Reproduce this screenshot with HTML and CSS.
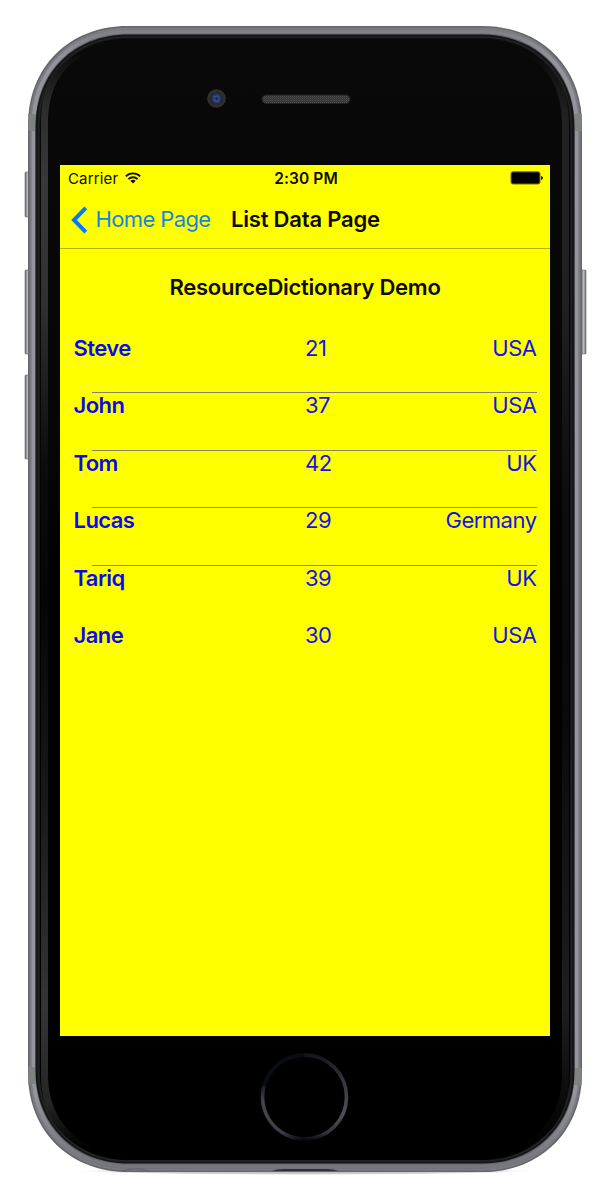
FILE: index.html
```html
<!DOCTYPE html>
<html lang="en">
<head>
<meta charset="utf-8">
<title>List Data Page</title>
<link rel="stylesheet" href="styles.css">
</head>
<body>
<main class="stage">
  <svg class="shell" viewBox="0 0 608 1200" aria-hidden="true">
    <defs>
      <linearGradient id="glareL" x1="0" y1="0" x2="0" y2="1">
        <stop offset="0" stop-color="#090909"/><stop offset=".05" stop-color="#2c2c2c"/>
        <stop offset=".12" stop-color="#383838"/><stop offset=".23" stop-color="#303030"/>
        <stop offset=".38" stop-color="#0c0c0c"/><stop offset=".5" stop-color="#050505"/>
        <stop offset=".7" stop-color="#1b1b1b"/><stop offset=".87" stop-color="#353535"/>
        <stop offset=".96" stop-color="#242424"/><stop offset="1" stop-color="#000"/>
      </linearGradient>
      <linearGradient id="glareR" x1="0" y1="0" x2="0" y2="1">
        <stop offset="0" stop-color="#090909"/><stop offset=".06" stop-color="#222"/>
        <stop offset=".23" stop-color="#202020"/><stop offset=".4" stop-color="#0d0d0d"/>
        <stop offset=".6" stop-color="#090909"/><stop offset=".87" stop-color="#1e1e1e"/>
        <stop offset="1" stop-color="#000"/>
      </linearGradient>
      <linearGradient id="face" x1="0" y1="0" x2="0" y2="1">
        <stop offset="0" stop-color="#090909"/><stop offset=".35" stop-color="#060606"/>
        <stop offset=".5" stop-color="#000"/>
      </linearGradient>
      <linearGradient id="band" gradientUnits="userSpaceOnUse" x1="0" y1="26" x2="0" y2="1172">
        <stop offset="0" stop-color="#7d7e84"/><stop offset=".03" stop-color="#94959c"/><stop offset=".93" stop-color="#94959c"/><stop offset="1" stop-color="#737479"/>
      </linearGradient>
      <linearGradient id="key" x1="0" y1="0" x2="1" y2="0">
        <stop offset="0" stop-color="#66676b"/><stop offset=".5" stop-color="#b9bac0"/><stop offset="1" stop-color="#717277"/>
      </linearGradient>
      <linearGradient id="ringA" gradientUnits="userSpaceOnUse" x1="304" y1="1054" x2="304" y2="1140">
        <stop offset="0" stop-color="#11161b"/><stop offset=".3" stop-color="#36363d"/><stop offset=".7" stop-color="#50505a"/><stop offset=".92" stop-color="#33333a"/><stop offset="1" stop-color="#05090c"/>
      </linearGradient>
      <linearGradient id="ringB" gradientUnits="userSpaceOnUse" x1="262" y1="1080" x2="304" y2="1139">
        <stop offset="0" stop-color="#05090c"/><stop offset=".25" stop-color="#45454d"/><stop offset=".75" stop-color="#3d3d45"/><stop offset="1" stop-color="#05090c"/>
      </linearGradient>
      <radialGradient id="lens">
        <stop offset="0" stop-color="#131b33"/><stop offset=".25" stop-color="#304b89"/><stop offset=".48" stop-color="#202d55"/><stop offset=".6" stop-color="#282828"/><stop offset="1" stop-color="#343434"/>
      </radialGradient>
      <pattern id="mesh" width="2" height="2" patternUnits="userSpaceOnUse">
        <rect width="2" height="2" fill="#303030"/><rect width="1" height="1" fill="#505050"/><rect x="1" y="1" width="1" height="1" fill="#464646"/>
      </pattern>
      <radialGradient id="shade"><stop offset="0" stop-color="#999" stop-opacity=".8"/><stop offset=".8" stop-color="#aaa" stop-opacity=".5"/><stop offset="1" stop-color="#fff" stop-opacity="0"/></radialGradient>
    </defs>

    <ellipse cx="305" cy="1171" rx="232" ry="4" fill="url(#shade)"/>

    <!-- side keys -->
    <g fill="url(#key)" stroke="#66676b" stroke-width=".6">
      <rect x="25" y="172" width="5" height="45" rx="1"/>
      <rect x="25" y="270" width="5" height="84" rx="1"/>
      <rect x="25" y="375" width="5" height="84" rx="1"/>
      <rect x="581" y="270" width="5" height="84" rx="1"/>
    </g>

    <!-- metal band -->
    <g fill="none">
      <path fill="#66676c" d="M128 26H482C540 26 582 66 582 125V1073C582 1132 540 1172 482 1172H128C70 1172 28 1132 28 1073V125C28 66 70 26 128 26Z"/>
      <path stroke="#7b7c82" stroke-width="2" d="M128 28.500H482C538 28.500 579.500 68 579.500 125V1073C579.500 1130 538 1169.500 482 1169.500H128C72 1169.500 30.500 1130 30.500 1073V125C30.500 68 72 28.500 128 28.500Z"/>
      <path stroke="url(#band)" stroke-width="4" d="M128 31.500H482C537 31.500 576.500 70 576.500 125V1073C576.500 1128 537 1166.500 482 1166.500H128C73 1166.500 33.500 1128 33.500 1073V125C33.500 70 73 31.500 128 31.500Z"/>
    </g>
    <g fill="#7e8380"><path d="M28.300 114h8v17h-8zM573.700 114h8v17h-8zM28.300 1067h8v17h-8zM573.700 1068h8v17h-8z"/></g>
    <path fill="#303135" d="M272 1171Q276 1169 284 1169H326Q334 1169 338 1171Z"/>
    <path fill="none" stroke="#606167" d="M123 1171Q127 1169 133 1169H140Q145 1169 148 1171"/>

    <!-- glass front -->
    <path fill="#151516" d="M128 34.500H482C535 34.500 574.500 72 574.500 127V1071C574.500 1125 535 1163.500 482 1163.500H128C75 1163.500 35.500 1125 35.500 1071V127C35.500 72 75 34.500 128 34.500Z"/>
    <path fill="none" stroke="#222325" stroke-width="1.500" d="M128 37H482C534 37 571.500 74 571.500 127V1071C571.500 1124 534 1161 482 1161H128C76 1161 38.500 1124 38.500 1071V127C38.500 74 76 37 128 37Z"/>
    <path fill="url(#face)" d="M128 38.500H482C533 38.500 570 75 570 127V1071C570 1123 533 1160 482 1160H128C77 1160 40 1123 40 1071V127C40 75 77 38.500 128 38.500Z"/>
    <path fill="url(#glareL)" d="M95 50C58 56 41 83 41 124V1074C41 1115 59 1142 95 1149C64 1134 48 1109 48 1074V124C48 83 66 61 95 50Z"/>
    <path fill="url(#glareR)" d="M515 50C552 58 569 84 569 124V1074C569 1114 551 1142 515 1149C546 1133 562 1108 562 1074V124C562 85 544 61 515 50Z"/>

    <circle cx="216.500" cy="98.500" r="9.300" fill="url(#lens)"/>
    <path d="M213 96l3 1 2-2M213 100l3 2 4-1" fill="none" stroke="#3a5699" stroke-width=".8"/>
    <rect x="262" y="95" width="88" height="8.500" rx="4.250" fill="url(#mesh)" stroke="#222"/>

    <circle cx="304.500" cy="1097" r="42" fill="none" stroke="#080d11" stroke-width="4"/>
    <path d="M304.500 1055A42 42 0 0 1 304.500 1139" fill="none" stroke="url(#ringA)" stroke-width="3.500"/>
    <path d="M264 1086A42 42 0 0 0 304.500 1139" fill="none" stroke="url(#ringB)" stroke-width="3.500"/>
  </svg>

  <section class="screen">
    <header class="status">
      <div class="carrier">
        <span class="carrier-name">Carrier</span>
        <svg class="wifi" viewBox="0 0 16 12" aria-hidden="true">
          <g fill="none" stroke="#111100" stroke-width="1.800"><path d="M.8 4.300C4.800.3 11.200.3 15.200 4.300"/><path d="M3.400 7.100C6 4.600 10 4.600 12.600 7.100"/></g>
          <path fill="#111100" d="M5.300 8.800Q8 6.600 10.700 8.800L8 11.600Z"/>
        </svg>
      </div>
      <time class="clock">2:30 PM</time>
      <svg class="battery" viewBox="0 0 33 14" aria-hidden="true">
        <rect x="1" y=".8" width="29" height="12.200" rx="2" fill="#000" stroke="#737300" stroke-width="1"/>
        <path d="M31 5Q33 5.500 33 7T31 9Z" fill="#111100"/>
      </svg>
    </header>
    <nav class="nav">
      <a class="back">
        <svg class="chevron" viewBox="0 0 17 28" aria-hidden="true"><path d="M14.800 1.800 3 14 14.800 26.200" fill="none" stroke="#007aff" stroke-width="4"/></svg>
        <span class="back-text">Home Page</span>
      </a>
      <h1 class="title">List Data Page</h1>
    </nav>
    <h2 class="heading">ResourceDictionary Demo</h2>
    <ul class="list">
      <li class="row"><b>Steve</b><span>21</span><span class="country">USA</span></li>
      <li class="row"><b>John</b><span>37</span><span class="country">USA</span></li>
      <li class="row"><b>Tom</b><span>42</span><span class="country">UK</span></li>
      <li class="row"><b>Lucas</b><span>29</span><span class="country">Germany</span></li>
      <li class="row"><b>Tariq</b><span>39</span><span class="country">UK</span></li>
      <li class="row"><b>Jane</b><span>30</span><span class="country">USA</span></li>
    </ul>
  </section>
</main>
</body>
</html>
```
FILE: styles.css
```css
body {
  margin: 0;
  background: #fff;
  font-family: Inter, "Liberation Sans", sans-serif;
  color: #0c0c00;
}
.stage {
  display: grid;
  width: 608px;
  height: 1200px;
}
.shell,
.screen {
  grid-area: 1 / 1;
}
.shell {
  width: 608px;
  height: 1200px;
}
.screen {
  width: 490px;
  height: 871.5px;
  margin: 164.5px 0 0 60px;
  background: #ff0;
}
.status {
  display: grid;
  grid-template-columns: 1fr auto 1fr;
  align-items: center;
  height: 27px;
  padding: 0 7px 0 8px;
}
.carrier {
  display: flex;
  align-items: center;
  gap: 7px;
}
.carrier-name {
  font-size: 15px;
  letter-spacing: 0.15px;
}
.wifi {
  width: 16px;
  height: 12px;
}
.clock {
  padding-left: 1px;
  font-size: 15.5px;
  font-weight: 600;
  letter-spacing: 0.1px;
}
.battery {
  width: 33px;
  height: 14px;
  justify-self: end;
}
.nav {
  display: flex;
  align-items: center;
  height: 56px;
  padding-left: 11px;
  border-bottom: 1px solid #b2b200;
}
.back {
  display: flex;
  align-items: center;
  gap: 7.5px;
  width: 160px;
  color: #1486e0;
}
.chevron {
  width: 17px;
  height: 28px;
}
.back-text {
  font-size: 22px;
  letter-spacing: -0.62px;
  line-height: 26px;
  padding-bottom: 1px;
  white-space: nowrap;
}
.title {
  margin: 0;
  padding-bottom: 1px;
  font-size: 22px;
  line-height: 26px;
  font-weight: 600;
  letter-spacing: -0.2px;
  white-space: nowrap;
}
.heading {
  margin: 0;
  height: 87px;
  line-height: 76px;
  font-size: 22px;
  font-weight: 600;
  letter-spacing: -0.27px;
  text-align: center;
}
.list {
  margin: 0;
  padding: 0 13px;
  list-style: none;
}
.row {
  display: grid;
  grid-template-columns: 232px 1fr auto;
  box-sizing: border-box;
  height: 57.5px;
  font-size: 22px;
  line-height: 25px;
  letter-spacing: -0.5px;
  color: #1414e6;
  background: linear-gradient(#85856a, #85856a) 19px 100% / 100% 1px no-repeat;
}
.row:nth-child(n + 5) {
  background: none;
}
.row b {
  padding-left: 0.5px;
  font-weight: 600;
  letter-spacing: -0.55px;
  color: #0a0aee;
}
.country {
  margin-right: 0.5px;
}
```
